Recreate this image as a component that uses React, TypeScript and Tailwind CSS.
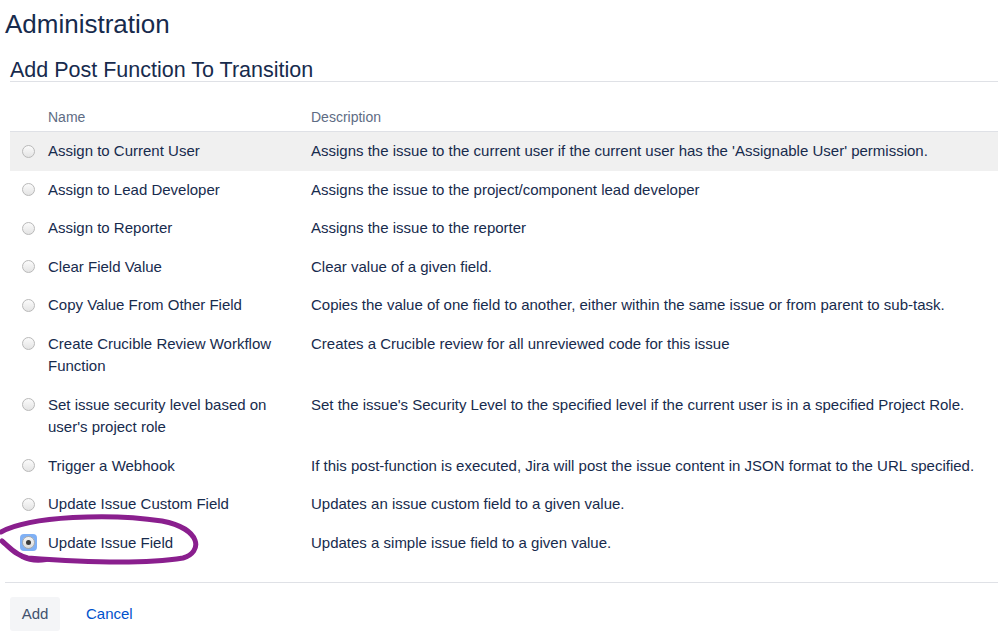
import React from "react";

const rows = [
  { name: "Assign to Current User", desc: "Assigns the issue to the current user if the current user has the 'Assignable User' permission." },
  { name: "Assign to Lead Developer", desc: "Assigns the issue to the project/component lead developer" },
  { name: "Assign to Reporter", desc: "Assigns the issue to the reporter" },
  { name: "Clear Field Value", desc: "Clear value of a given field." },
  { name: "Copy Value From Other Field", desc: "Copies the value of one field to another, either within the same issue or from parent to sub-task." },
  { name: "Create Crucible Review Workflow Function", desc: "Creates a Crucible review for all unreviewed code for this issue" },
  { name: "Set issue security level based on user's project role", desc: "Set the issue's Security Level to the specified level if the current user is in a specified Project Role." },
  { name: "Trigger a Webhook", desc: "If this post-function is executed, Jira will post the issue content in JSON format to the URL specified." },
  { name: "Update Issue Custom Field", desc: "Updates an issue custom field to a given value." },
  { name: "Update Issue Field", desc: "Updates a simple issue field to a given value." },
];

const Radio = ({ checked }: { checked: boolean }) => {
  if (checked) {
    return (
      <span className="-ml-[2px] -mt-[2px] flex h-[17px] w-[17px] items-center justify-center rounded-[4px] bg-[#7fb0f5]">
        <span className="flex h-[13px] w-[13px] items-center justify-center rounded-full border border-[#a9a9a9] bg-gradient-to-b from-[#f4f4f4] to-[#dcdcdc]">
          <span className="h-[5px] w-[5px] rounded-full bg-[#3a3a3a]" />
        </span>
      </span>
    );
  }
  return (
    <span className="block h-[13px] w-[13px] rounded-full border border-[#b9b9b9] bg-gradient-to-b from-[#fbfbfb] to-[#e4e4e4]" />
  );
};

export default function App() {
  return (
    <div
      className="relative h-[639px] w-[998px] overflow-hidden bg-white text-[#172b4d]"
      style={{ fontFamily: '"Liberation Sans", Arial, sans-serif' }}
    >
      <h1 className="pl-[5px] pt-[9px] text-[26px] leading-[30px]">Administration</h1>

      <div className="ml-[10px]">
        <h2 className="mt-[20px] border-b border-[#dfe1e6] text-[21.5px] leading-[22px]">
          Add Post Function To Transition
        </h2>

        <div className="flex border-b border-[#dfe1e6] pt-[25px] pb-[4px] text-[14px] leading-[20px] text-[#5e6c84]">
          <div className="w-[38px]" />
          <div className="w-[263px]">Name</div>
          <div className="flex-1">Description</div>
        </div>

        {rows.map((row, i) => (
          <div
            key={row.name}
            className={`flex py-2 text-[15px] leading-[22.5px] ${i === 0 ? "bg-[#f0f0f0]" : ""}`}
          >
            <div className="w-[38px] pl-[11.5px] pt-[4.75px]">
              <Radio checked={i === rows.length - 1} />
            </div>
            <div className="w-[263px] pr-[20px]">{row.name}</div>
            <div className="flex-1">{row.desc}</div>
          </div>
        ))}
      </div>

      <div className="ml-[5px] mt-[20px] border-t border-[#dfe1e6] pt-[14px]">
        <div className="ml-[5px] flex items-center gap-[26px] text-[15px]">
          <button className="h-[34px] w-[50px] rounded-[3px] bg-[#f4f5f7] text-[#42526e]">Add</button>
          <span className="text-[#0052cc]">Cancel</span>
        </div>
      </div>

      <svg className="pointer-events-none absolute left-0 top-0" width="998" height="639">
        <path
          d="M 1 532 C 30 516, 110 513, 162 521 C 202 529, 203 552, 183 558 C 140 565, 80 562, 28 558 C 16 556, 8 546, 2 541"
          fill="none"
          stroke="#8a1f8e"
          strokeWidth="5"
          strokeLinecap="round"
        />
        <path d="M 22 557 C 30 561, 40 561, 46 560" fill="none" stroke="#8a1f8e" strokeWidth="4" strokeLinecap="round" />
      </svg>
    </div>
  );
}
